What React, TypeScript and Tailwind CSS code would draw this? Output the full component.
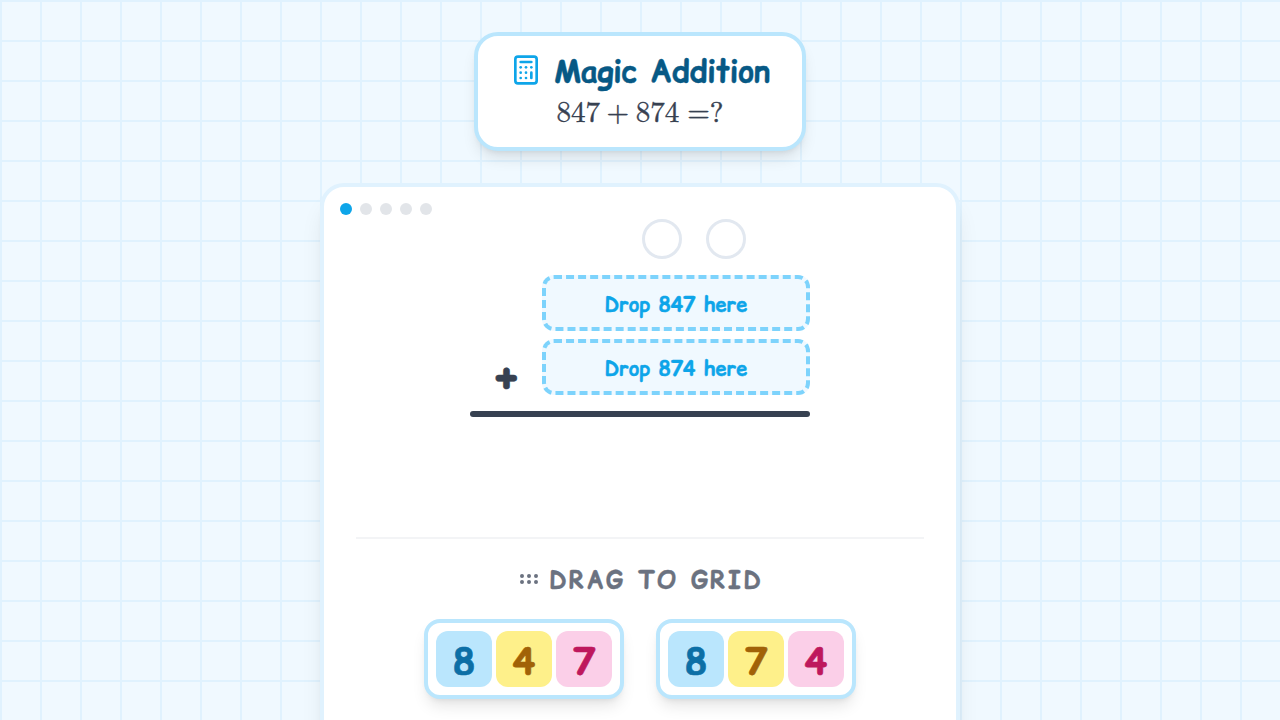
import { Calculator, GripHorizontal } from "lucide-react";

const tileColors = [
  "bg-[#bae6fd] text-[#0c6fa6]",
  "bg-[#fef08a] text-[#a16207]",
  "bg-[#fbcfe8] text-[#be185d]",
];

function DropZone({ value }: { value: string }) {
  return (
    <div className="flex h-14 w-[268px] items-center justify-center rounded-xl border-4 border-dashed border-[#7dd3fc] bg-[#f0f9ff] pt-1 text-xl font-bold text-[#0ea5e9] [-webkit-text-stroke:0.3px_#0ea5e9]">
      Drop {value} here
    </div>
  );
}

function NumberTray({ digits }: { digits: string[] }) {
  return (
    <div className="flex h-20 w-[200px] gap-1 rounded-2xl border-4 border-[#bae6fd] bg-white p-2 shadow-lg">
      {digits.map((digit, i) => (
        <div
          key={i}
          className={`flex h-14 w-14 items-center justify-center rounded-xl pt-[5px] text-4xl font-bold [-webkit-text-stroke:0.6px_currentColor] ${tileColors[i]}`}
        >
          {digit}
        </div>
      ))}
    </div>
  );
}

export default function App() {
  return (
    <div className="flex h-[720px] w-full flex-col items-center overflow-hidden bg-[#f0f9ff] bg-[linear-gradient(#e0f2fe_2px,transparent_2px),linear-gradient(90deg,#e0f2fe_2px,transparent_2px)] bg-[size:40px_40px] pt-8 font-['Comic_Relief','Comic_Neue',sans-serif]">
      <header className="flex h-[119.4px] w-[332px] shrink-0 flex-col items-center rounded-3xl border-4 border-[#bae6fd] bg-white pt-[18px] shadow-lg">
        <h1 className="flex h-9 items-center gap-3 text-3xl leading-9 font-bold text-[#075985]">
          <Calculator size={32} className="-mt-1 text-[#0ea5e9]" />
          <span className="-mt-[3px] [-webkit-text-stroke:0.4px_#075985]">Magic Addition</span>
        </h1>
        <div className="mt-0.5 flex h-9 items-center font-['Latin_Modern_Roman','Liberation_Serif',serif] text-[29.04px] leading-9 text-[#374151] [-webkit-text-stroke:0.4px_#374151]">
          <span>847</span>
          <span className="mx-[6.5px]">+</span>
          <span>874</span>
          <span className="ml-[8px]">=?</span>
        </div>
      </header>

      <main className="mt-[31.6px] flex h-[640px] w-[640px] shrink-0 flex-col rounded-3xl border-4 border-[#e0f2fe] bg-white px-8 pt-4 shadow-xl">
        <div className="-ml-4 flex h-3 gap-2">
          <i className="size-3 rounded-full bg-[#0ea5e9]" />
          <i className="size-3 rounded-full bg-[#e2e5e9]" />
          <i className="size-3 rounded-full bg-[#e2e5e9]" />
          <i className="size-3 rounded-full bg-[#e2e5e9]" />
          <i className="size-3 rounded-full bg-[#e2e5e9]" />
        </div>

        <section className="mx-auto mt-1 flex h-[198px] w-[340px] flex-col">
          <div className="mr-16 flex justify-end gap-6">
            <div className="size-10 rounded-full border-3 border-[#e2e8f0]" />
            <div className="size-10 rounded-full border-3 border-[#e2e8f0]" />
          </div>
          <div className="mt-4 flex justify-between">
            <div className="flex w-[72px] items-end justify-center text-5xl leading-[38px] font-bold text-[#374151] [-webkit-text-stroke:0.5px_#374151]">
              +
            </div>
            <div className="flex flex-col gap-2">
              <DropZone value="847" />
              <DropZone value="874" />
            </div>
          </div>
          <div className="mt-4 h-1.5 rounded-full bg-[#374151]" />
        </section>

        <section className="mt-[120px] flex flex-col items-center border-t-2 border-[#f3f4f6] pt-6">
          <h2 className="flex h-8 items-center gap-2 text-2xl font-bold tracking-widest text-[#6b7280] uppercase">
            <GripHorizontal size={24} />
            <span className="pt-[3px] [-webkit-text-stroke:0.3px_#6b7280]">Drag to grid</span>
          </h2>
          <div className="mt-6 flex gap-8">
            <NumberTray digits={["8", "4", "7"]} />
            <NumberTray digits={["8", "7", "4"]} />
          </div>
        </section>
      </main>
    </div>
  );
}
